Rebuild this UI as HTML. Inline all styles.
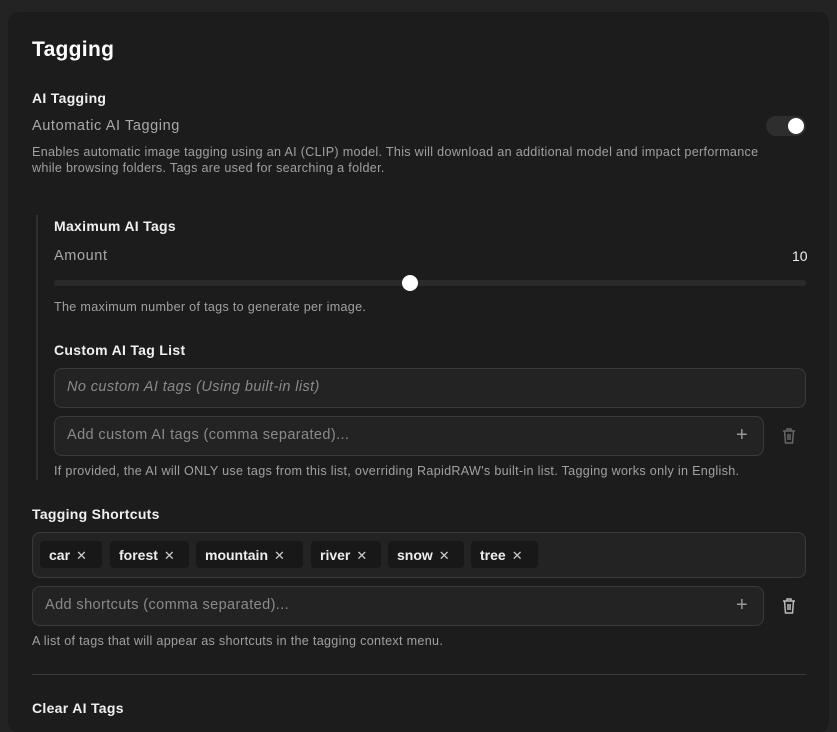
<!DOCTYPE html>
<html><head><meta charset="utf-8"><style>
*{box-sizing:border-box;margin:0;padding:0}
body{width:837px;height:712px;overflow:hidden;background:#232323;font-family:"Liberation Sans",sans-serif;color:#e8e8e8;position:relative}
.card{position:absolute;left:8px;top:12px;width:821px;height:720px;background:#1c1c1c;border-radius:10px}
.a{position:absolute;white-space:nowrap}
.h2{font-size:14px;font-weight:bold;color:#f0f0f0;letter-spacing:0.3px}
.lab{font-size:14.5px;color:#a8a8a8;letter-spacing:0.6px}
.d{font-size:12.6px;color:#a0a0a0;letter-spacing:0.3px}
.box{position:absolute;background:#232323;border:1px solid #3a3a3a;border-radius:8px}
.ph{font-size:14.5px;color:#8a8a8a;letter-spacing:0.4px}
.chip{position:absolute;top:541px;height:27px;background:#181818;border-radius:4px;font-size:14px;font-weight:bold;color:#eee;padding:6px 0 0 9px}
.chip span{font-weight:normal;color:#ccc;margin-left:6px;font-size:13px}
</style></head><body>
<div class="card"></div>
<div class="a" style="left:32px;top:38px;font-size:21px;font-weight:bold;color:#fff;letter-spacing:0.3px">Tagging</div>
<div class="a h2" style="left:32px;top:90px">AI Tagging</div>
<div class="a lab" style="left:32px;top:118px">Automatic AI Tagging</div>
<div class="a" style="left:766px;top:116px;width:40px;height:20px;border-radius:10px;background:#2e2e2e"></div>
<div class="a" style="left:788px;top:118px;width:16px;height:16px;border-radius:50%;background:#fff"></div>
<div class="a d" style="left:32px;top:144px;line-height:16px">Enables automatic image tagging using an AI (CLIP) model. This will download an additional model and impact performance<br>while browsing folders. Tags are used for searching a folder.</div>
<div class="a" style="left:36px;top:215px;width:2px;height:265px;background:#2e2e2e"></div>
<div class="a h2" style="left:54px;top:218px">Maximum AI Tags</div>
<div class="a lab" style="left:54px;top:248px">Amount</div>
<div class="a" style="left:792px;top:248px;font-size:14px;color:#eee">10</div>
<div class="a" style="left:54px;top:280px;width:752px;height:6px;border-radius:3px;background:#2a2a2a"></div>
<div class="a" style="left:402px;top:275px;width:16px;height:16px;border-radius:50%;background:#fff"></div>
<div class="a d" style="left:54px;top:300px">The maximum number of tags to generate per image.</div>
<div class="a h2" style="left:54px;top:342px">Custom AI Tag List</div>
<div class="box" style="left:54px;top:368px;width:752px;height:40px"></div>
<div class="a ph" style="left:67px;top:379px;font-style:italic">No custom AI tags (Using built-in list)</div>
<div class="box" style="left:54px;top:416px;width:710px;height:40px"></div>
<div class="a ph" style="left:67px;top:427px">Add custom AI tags (comma separated)...</div>
<div class="a" style="left:736px;top:424px;font-size:20px;color:#999">+</div>
<svg class="a" style="left:781px;top:427px" width="16" height="18" viewBox="0 0 16 18" fill="none" stroke="#666" stroke-width="1.5"><path d="M2 4h12M6 4V2h4v2M3.5 4l1 12h7l1-12M7 7v6M9 7v6"/></svg>
<div class="a d" style="left:54px;top:464px">If provided, the AI will ONLY use tags from this list, overriding RapidRAW's built-in list. Tagging works only in English.</div>
<div class="a h2" style="left:32px;top:506px">Tagging Shortcuts</div>
<div class="box" style="left:32px;top:532px;width:774px;height:46px"></div>
<div class="chip" style="left:40px;width:62px">car<span>✕</span></div>
<div class="chip" style="left:110px;width:79px">forest<span>✕</span></div>
<div class="chip" style="left:196px;width:107px">mountain<span>✕</span></div>
<div class="chip" style="left:311px;width:70px">river<span>✕</span></div>
<div class="chip" style="left:388px;width:76px">snow<span>✕</span></div>
<div class="chip" style="left:471px;width:67px">tree<span>✕</span></div>
<div class="box" style="left:32px;top:586px;width:732px;height:40px"></div>
<div class="a ph" style="left:45px;top:597px">Add shortcuts (comma separated)...</div>
<div class="a" style="left:736px;top:594px;font-size:20px;color:#999">+</div>
<svg class="a" style="left:781px;top:597px" width="16" height="18" viewBox="0 0 16 18" fill="none" stroke="#bbb" stroke-width="1.5"><path d="M2 4h12M6 4V2h4v2M3.5 4l1 12h7l1-12M7 7v6M9 7v6"/></svg>
<div class="a d" style="left:32px;top:634px">A list of tags that will appear as shortcuts in the tagging context menu.</div>
<div class="a" style="left:32px;top:674px;width:774px;height:1px;background:#3a3a3a"></div>
<div class="a h2" style="left:32px;top:700px">Clear AI Tags</div>
</body></html>
